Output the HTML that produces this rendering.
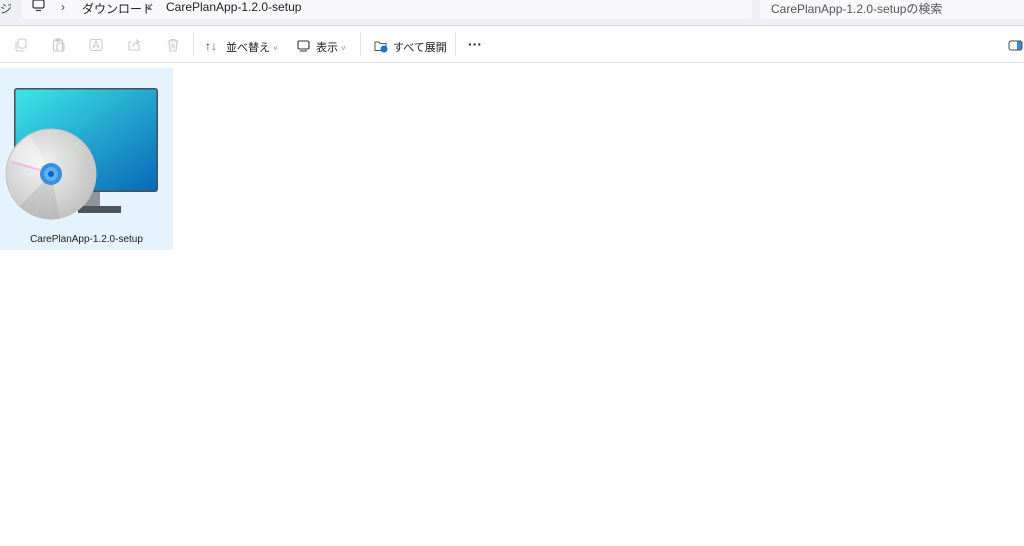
<!DOCTYPE html>
<html><head><meta charset="utf-8"><style>
body{margin:0;width:1024px;height:546px;background:#fff;overflow:hidden;position:relative;font-family:"Liberation Sans","Noto Sans CJK JP",sans-serif;}
.top{position:absolute;left:0;top:0;width:1024px;height:25px;background:#eef0f6;border-bottom:1px solid #dcdce6;}
.addr{position:absolute;left:22px;top:0;width:730px;height:19px;background:#f9f9fc;border-radius:0 0 4px 4px;}
.srch{position:absolute;left:760px;top:0;width:264px;height:19px;background:#f9f9fc;border-radius:0 0 0 4px;}
.t{position:absolute;font-size:12px;color:#222;white-space:nowrap;}
.tb{position:absolute;left:0;top:26px;width:1024px;height:36px;background:#fff;border-bottom:1px solid #dcdce6;}
.sep{position:absolute;top:32px;width:1px;height:24px;background:#e3e3e3;}
.tile{position:absolute;left:0;top:68px;width:173px;height:182px;background:#e5f3ff;}
.ic{position:absolute;top:38px}
</style></head><body>
<div class="top"><div class="addr"></div><div class="srch"></div></div>
<svg style="position:absolute;left:32px;top:0" width="14" height="12"><rect x="1" y="0" width="11" height="8" rx="1.5" fill="none" stroke="#333" stroke-width="1.2"/><line x1="4" y1="10.5" x2="9" y2="10.5" stroke="#333" stroke-width="1.2"/></svg>
<div class="t" style="left:0;top:0;color:#444">ジ</div>
<div class="t" style="left:61px;top:0;color:#444">›</div>
<div class="t" style="left:82px;top:0">ダウンロード</div>
<div class="t" style="left:147px;top:0;color:#444">›</div>
<div class="t" style="left:166px;top:0">CarePlanApp-1.2.0-setup</div>
<div class="t" style="left:771px;top:0;color:#555">CarePlanApp-1.2.0-setupの検索</div>
<div class="tb"></div>
<svg class="ic" style="left:14px" width="14" height="14" fill="none" stroke="#c4c8d0" stroke-width="1.1"><rect x="4" y="1" width="8" height="9" rx="2"/><path d="M2 4v7a2 2 0 0 0 2 2h6"/></svg>
<svg class="ic" style="left:52px" width="14" height="14" fill="none" stroke="#c4c8d0" stroke-width="1.1"><rect x="1.5" y="2" width="9" height="11" rx="1.5"/><rect x="5" y="5" width="7" height="8" rx="1.5"/><rect x="4" y="1" width="4" height="2"/></svg>
<svg class="ic" style="left:89px" width="14" height="14" fill="none" stroke="#c4c8d0" stroke-width="1.1"><rect x="1" y="1.5" width="12" height="11" rx="2"/><path d="M4 10l3-7 3 7M5 8h4"/></svg>
<svg class="ic" style="left:127px" width="14" height="14" fill="none" stroke="#c4c8d0" stroke-width="1.1"><path d="M12 6V12H2V4h3"/><path d="M6 9c0-3 2-5 6-5M9 1.5l3 2.5-3 2.5"/></svg>
<svg class="ic" style="left:166px" width="14" height="14" fill="none" stroke="#c4c8d0" stroke-width="1.1"><path d="M1.5 3h11M5 3V1.5h4V3M3 3l1 10h6l1-10M6 5.5v5M8 5.5v5"/></svg>
<div class="sep" style="left:193px"></div>
<div class="t" style="left:205px;top:39px;font-size:12px;color:#333">↑<span style="color:#1a6fd0">↓</span></div>
<div class="t" style="left:226px;top:39px;font-size:11px">並べ替え <span style="color:#888;font-size:8px">˅</span></div>
<svg style="position:absolute;left:297px;top:40px" width="13" height="12"><rect x="1" y="1" width="11" height="8" rx="1.5" fill="none" stroke="#333" stroke-width="1.1"/><line x1="3" y1="11" x2="10" y2="11" stroke="#333"/></svg>
<div class="t" style="left:316px;top:39px;font-size:11px">表示 <span style="color:#888;font-size:8px">˅</span></div>
<div class="sep" style="left:360px"></div>
<svg style="position:absolute;left:374px;top:39px" width="14" height="14"><path d="M1 3h4l1 1.5h6v7H1z" fill="none" stroke="#555" stroke-width="1"/><circle cx="10" cy="10" r="3.5" fill="#1a6fd0"/></svg>
<div class="t" style="left:393px;top:39px;font-size:11px">すべて展開</div>
<div class="sep" style="left:455px"></div>
<div class="t" style="left:468px;top:36px;font-size:14px;font-weight:bold">···</div>
<svg style="position:absolute;left:1008px;top:40px" width="16" height="12"><rect x="1" y="1" width="13" height="9" rx="2" fill="none" stroke="#444"/><rect x="9" y="1.5" width="4.5" height="8" fill="#3a86d8"/></svg>
<div class="tile"></div>
<svg style="position:absolute;left:0;top:80px" width="173" height="145">
<defs><linearGradient id="s" x1="0" y1="0" x2="1" y2="1"><stop offset="0" stop-color="#3de6e6"/><stop offset="1" stop-color="#0a68b8"/></linearGradient>
<radialGradient id="d" cx="0.4" cy="0.4" r="0.7"><stop offset="0" stop-color="#f4f4f4"/><stop offset="1" stop-color="#bdbdbd"/></radialGradient></defs>
<rect x="80" y="108" width="20" height="20" fill="#8d949c"/>
<rect x="78" y="126" width="43" height="7" fill="#4d545c"/>
<rect x="14" y="8" width="144" height="104" rx="3" fill="#4a5058"/>
<rect x="15.5" y="9.5" width="141" height="101" rx="2" fill="url(#s)"/>
<circle cx="51" cy="94" r="45" fill="url(#d)" stroke="#c4c4c4"/>
<path d="M51 94 L10 80 A45 45 0 0 1 30 55Z" fill="#fff" opacity=".35"/>
<path d="M51 94 L60 139 A45 45 0 0 1 20 126Z" fill="#999" opacity=".25"/>
<path d="M40 90 L12 82" stroke="#f3a0d8" stroke-width="2" opacity=".6"/>
<path d="M60 85 L80 60" stroke="#b8f0c0" stroke-width="2" opacity=".6"/>
<circle cx="51" cy="94" r="11" fill="#3a8edb"/>
<circle cx="51" cy="94" r="7" fill="#5fb0ee"/>
<circle cx="51" cy="94" r="3" fill="#0a62c8"/>
</svg>
<div class="t" style="left:0;width:173px;text-align:center;top:234px;font-size:10px;color:#222">CarePlanApp-1.2.0-setup</div>
</body></html>
